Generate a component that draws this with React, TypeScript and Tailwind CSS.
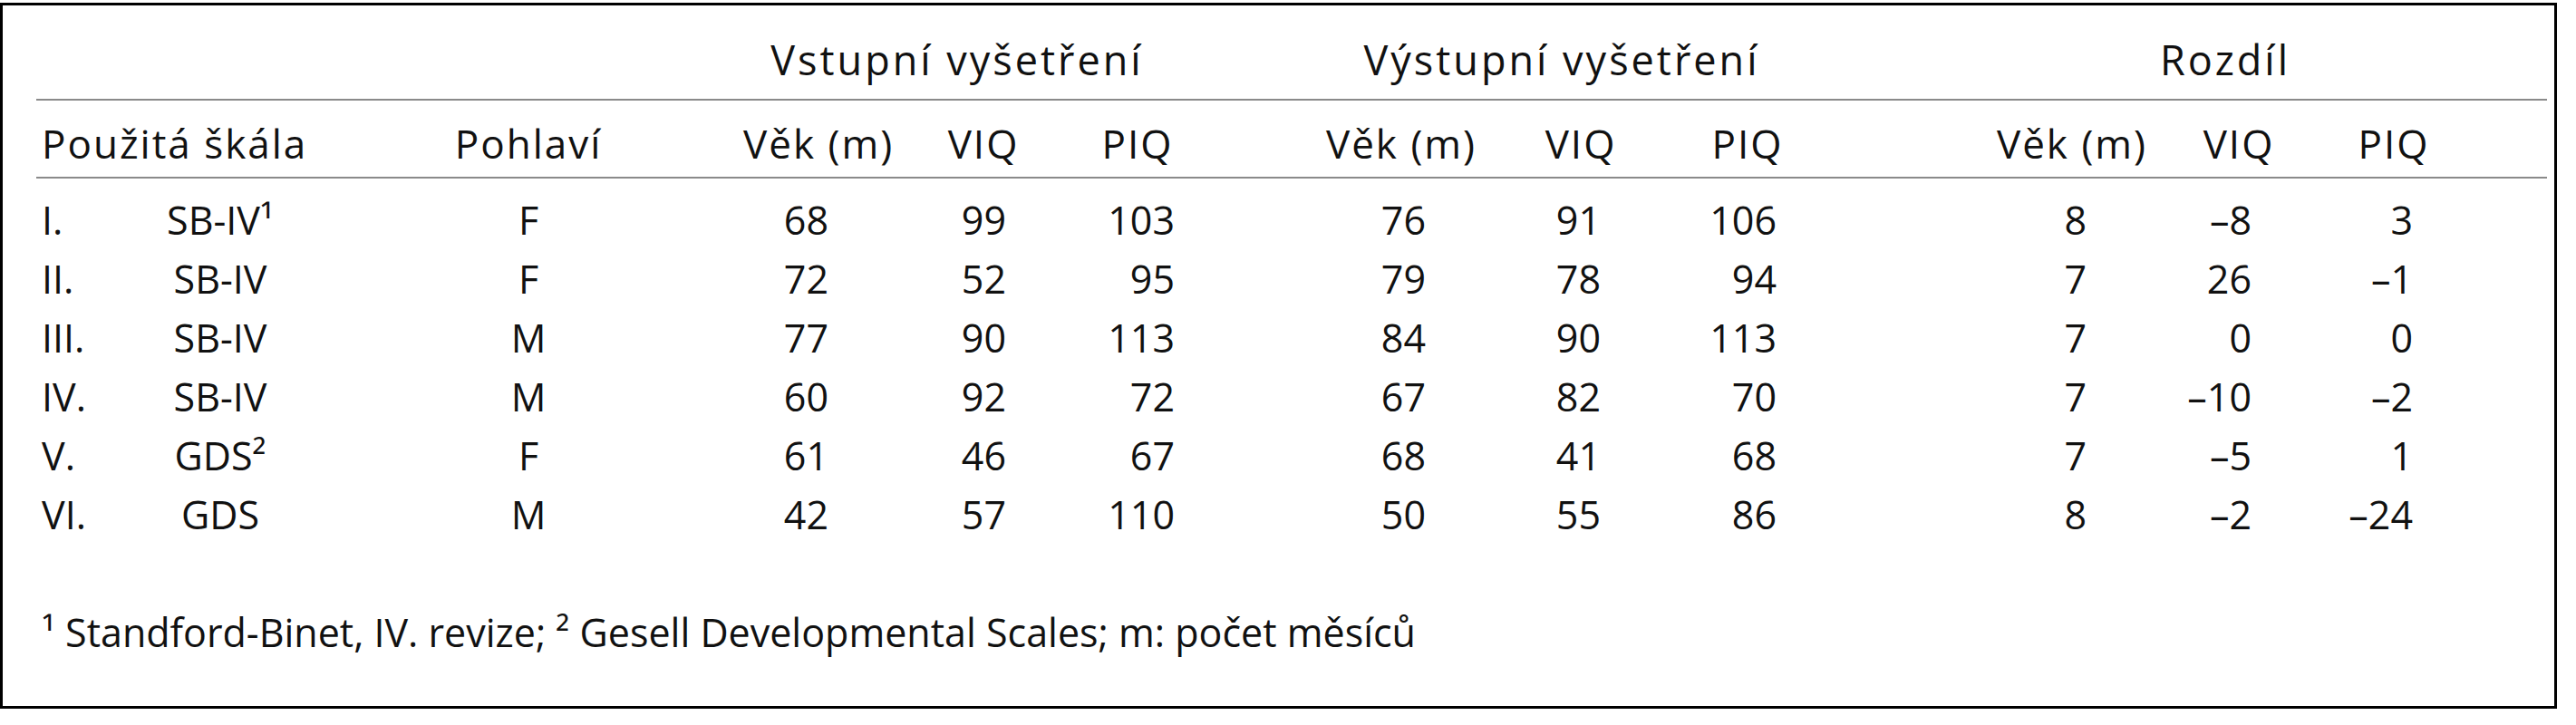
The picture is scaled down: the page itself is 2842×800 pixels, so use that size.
const cols = [
  { w: "w-[132px]", head: "text-center", num: "pr-[38px]" },
  { w: "w-[218px]", head: "text-center pl-[48px]", num: "pr-[60px]" },
  { w: "w-[170px]", head: "text-center", num: "pr-[44px]" },
  { w: "w-[300px]", head: "text-center pl-[112px]", num: "pr-[67px]" },
  { w: "w-[200px]", head: "text-center pl-[8px]", num: "pr-[74px]" },
  { w: "w-[180px]", head: "text-center pr-[4px]", num: "pr-[60px]" },
  { w: "w-[360px]", head: "text-center pl-[172px]", num: "pr-[78px]" },
  { w: "w-[180px]", head: "text-center", num: "pr-[76px]" },
  { w: "w-[250px]", head: "text-center pr-[88px]", num: "pr-[148px]" },
]

const heads = ["Věk (m)", "VIQ", "PIQ", "Věk (m)", "VIQ", "PIQ", "Věk (m)", "VIQ", "PIQ"]

const rows = [
  { no: "I.", scale: "SB-IV¹", sex: "F", vals: ["68", "99", "103", "76", "91", "106", "8", "–8", "3"] },
  { no: "II.", scale: "SB-IV", sex: "F", vals: ["72", "52", "95", "79", "78", "94", "7", "26", "–1"] },
  { no: "III.", scale: "SB-IV", sex: "M", vals: ["77", "90", "113", "84", "90", "113", "7", "0", "0"] },
  { no: "IV.", scale: "SB-IV", sex: "M", vals: ["60", "92", "72", "67", "82", "70", "7", "–10", "–2"] },
  { no: "V.", scale: "GDS²", sex: "F", vals: ["61", "46", "67", "68", "41", "68", "7", "–5", "1"] },
  { no: "VI.", scale: "GDS", sex: "M", vals: ["42", "57", "110", "50", "55", "86", "8", "–2", "–24"] },
]

export default function App() {
  return (
    <div className="w-[2842px] h-[800px] bg-white font-['Open_Sans','Noto_Sans',sans-serif] text-[43px] leading-[44px] text-[#111]">
      <div className="mt-[3px] w-[2821px] h-[779px] border-[3px] border-black pl-[37px] pr-[8px]">
        <div className="w-[2770px]">
          {/* group headers */}
          <div className="flex pt-[38px] pb-[21px] whitespace-nowrap text-[45px] tracking-[3px]">
            <div className="w-[780px]" />
            <div className="w-[520px] text-center pr-[48px]">Vstupní vyšetření</div>
            <div className="w-[680px] text-center pl-[86px]">Výstupní vyšetření</div>
            <div className="w-[790px] text-center pl-[80px]">Rozdíl</div>
          </div>
          <div className="h-[2px] bg-[#8a8a8a]" />

          {/* column headers */}
          <div className="flex pt-[25px] pb-[15px] whitespace-nowrap text-[44px] tracking-[2px]">
            <div className="w-[306px] pl-[6px]">Použitá škála</div>
            <div className="w-[474px] text-center">Pohlaví</div>
            {cols.map((c, i) => (
              <div key={i} className={`${c.w} ${c.head}`}>
                {heads[i]}
              </div>
            ))}
          </div>
          <div className="h-[2px] bg-[#8a8a8a]" />

          {/* data */}
          <div className="pt-[13px]">
            {rows.map((r) => (
              <div key={r.no} className="flex h-[65px] items-center whitespace-nowrap">
                <div className="w-[100px] pl-[6px]">{r.no}</div>
                <div className="w-[206px] text-center">{r.scale}</div>
                <div className="w-[474px] text-center">{r.sex}</div>
                {cols.map((c, i) => (
                  <div key={i} className={`${c.w} ${c.num} text-right`}>
                    {r.vals[i]}
                  </div>
                ))}
              </div>
            ))}
          </div>

          <p className="mt-[76px] pl-[6px] whitespace-nowrap">
            ¹ Standford-Binet, IV. revize; ² Gesell Developmental Scales; m: počet měsíců
          </p>
        </div>
      </div>
    </div>
  )
}
